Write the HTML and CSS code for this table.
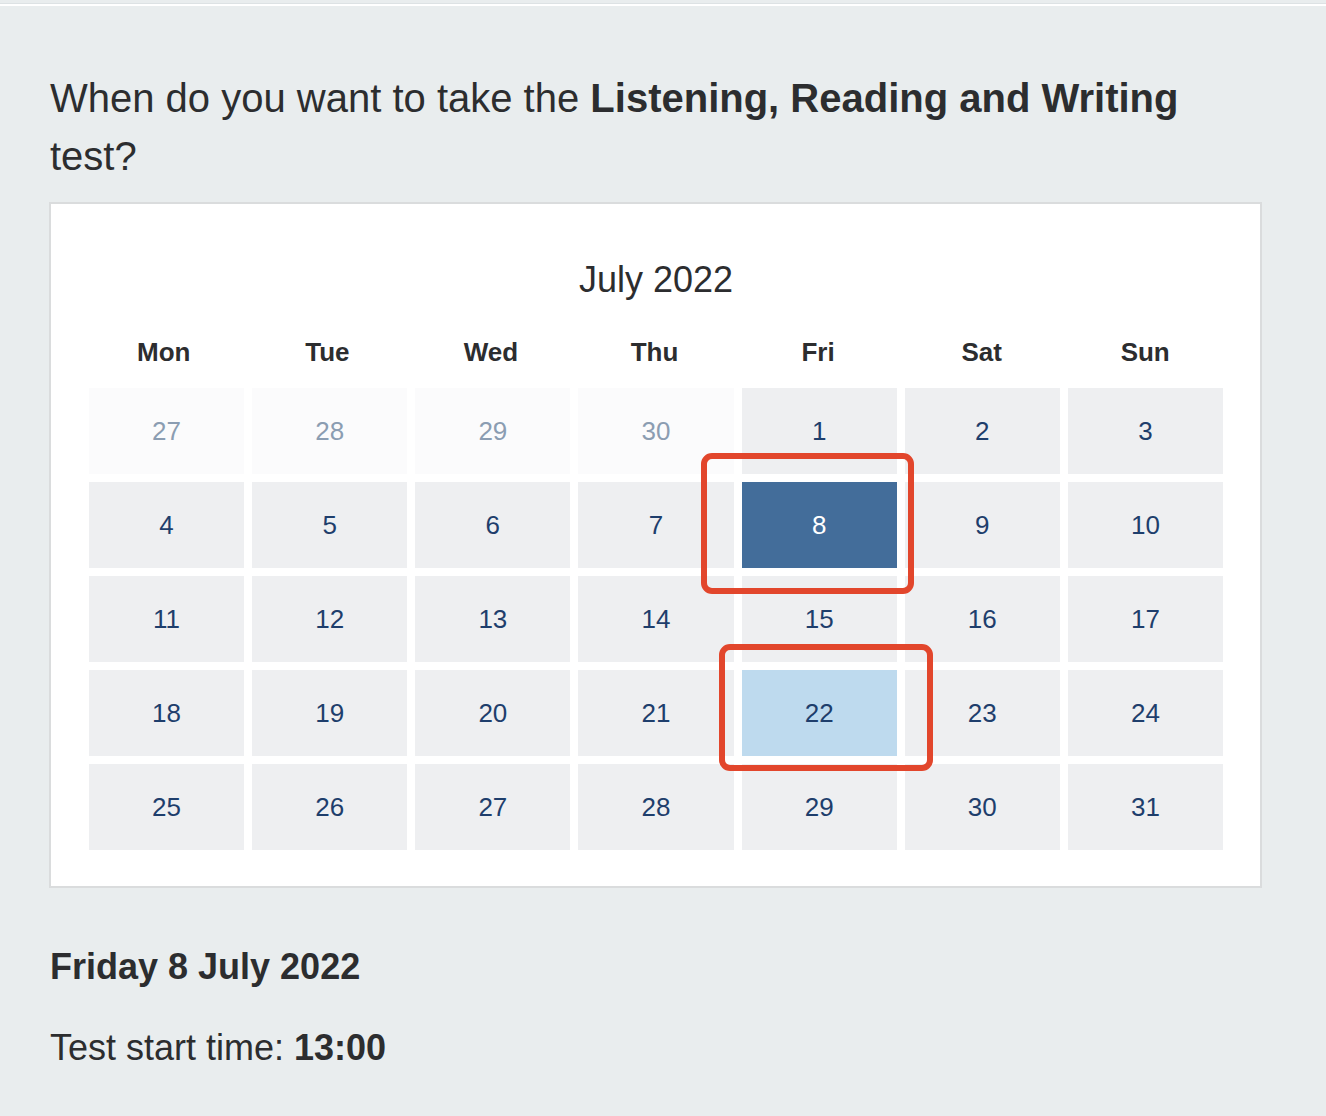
FILE: index.html
```html
<!DOCTYPE html>
<html lang="en">
<head>
<meta charset="utf-8">
<title>Choose test date</title>
<link rel="stylesheet" href="styles.css">
</head>
<body>
<div class="topbar"></div>
<main class="page">
  <h1 class="question">When do you want to take the <strong>Listening, Reading and Writing</strong> test?</h1>
  <section class="calendar">
    <div class="month">July 2022</div>
    <div class="weekdays">
      <div>Mon</div><div>Tue</div><div>Wed</div><div>Thu</div><div>Fri</div><div>Sat</div><div>Sun</div>
    </div>
    <div class="grid-wrap">
      <div class="days">
        <div class="day other">27</div>
        <div class="day other">28</div>
        <div class="day other">29</div>
        <div class="day other">30</div>
        <div class="day">1</div>
        <div class="day">2</div>
        <div class="day">3</div>
        <div class="day">4</div>
        <div class="day">5</div>
        <div class="day">6</div>
        <div class="day">7</div>
        <div class="day selected">8</div>
        <div class="day">9</div>
        <div class="day">10</div>
        <div class="day">11</div>
        <div class="day">12</div>
        <div class="day">13</div>
        <div class="day">14</div>
        <div class="day">15</div>
        <div class="day">16</div>
        <div class="day">17</div>
        <div class="day">18</div>
        <div class="day">19</div>
        <div class="day">20</div>
        <div class="day">21</div>
        <div class="day available">22</div>
        <div class="day">23</div>
        <div class="day">24</div>
        <div class="day">25</div>
        <div class="day">26</div>
        <div class="day">27</div>
        <div class="day">28</div>
        <div class="day">29</div>
        <div class="day">30</div>
        <div class="day">31</div>
      </div>
      <div class="mark mark-one"></div>
      <div class="mark mark-two"></div>
    </div>
  </section>
  <h2 class="chosen">Friday 8 July 2022</h2>
  <p class="start">Test start time: <strong>13:00</strong></p>
</main>
</body>
</html>
```
FILE: styles.css
```css
html, body {
  margin: 0;
  padding: 0;
}
body {
  background: #e9edee;
  font-family: "Liberation Sans", Arial, Helvetica, sans-serif;
  color: #2c2d2f;
}
.topbar {
  margin-top: 3px;
  height: 2px;
  border-top: 1px solid #dde2e4;
  background: #ffffff;
}
.page {
  width: 1213px;
  margin-left: 49px;
}
.question {
  margin: 63px 0 17px 1px;
  font-size: 40px;
  font-weight: 400;
  line-height: 58px;
}
.question strong {
  font-weight: 700;
}
.calendar {
  background: #ffffff;
  border: 2px solid #dadcdd;
  padding: 54px 37px 36px 38px;
}
.month {
  text-align: center;
  font-size: 36px;
  line-height: 43px;
  color: #2c2d2f;
}
.weekdays {
  margin-top: 36px;
  display: grid;
  grid-template-columns: repeat(7, 1fr);
  gap: 8px;
  font-size: 26px;
  font-weight: 700;
  line-height: 31px;
  text-align: center;
  margin-left: -3px;
}
.grid-wrap {
  position: relative;
  margin-top: 20px;
}
.days {
  display: grid;
  grid-template-columns: repeat(7, 1fr);
  gap: 8px;
}
.day {
  height: 86px;
  display: flex;
  align-items: center;
  justify-content: center;
  background: #eeeff1;
  color: #1e3e6c;
  font-size: 26px;
}
.day.other {
  background: #fbfbfc;
  color: #8b9db2;
}
.day.selected {
  background: #436d9a;
  color: #ffffff;
}
.day.available {
  background: #bedaee;
  color: #1e3e6c;
}
.mark {
  position: absolute;
  border: 6px solid #e2462c;
  border-radius: 11px;
  box-sizing: border-box;
}
.mark-one {
  left: 612px;
  top: 65px;
  width: 213px;
  height: 141px;
}
.mark-two {
  left: 630px;
  top: 256px;
  width: 214px;
  height: 127px;
}
.chosen {
  margin: 57px 0 0 1px;
  font-size: 36px;
  font-weight: 700;
  line-height: 43px;
}
.start {
  margin: 38px 0 0 1px;
  font-size: 36px;
  line-height: 43px;
}
.start strong {
  font-weight: 700;
}
```
